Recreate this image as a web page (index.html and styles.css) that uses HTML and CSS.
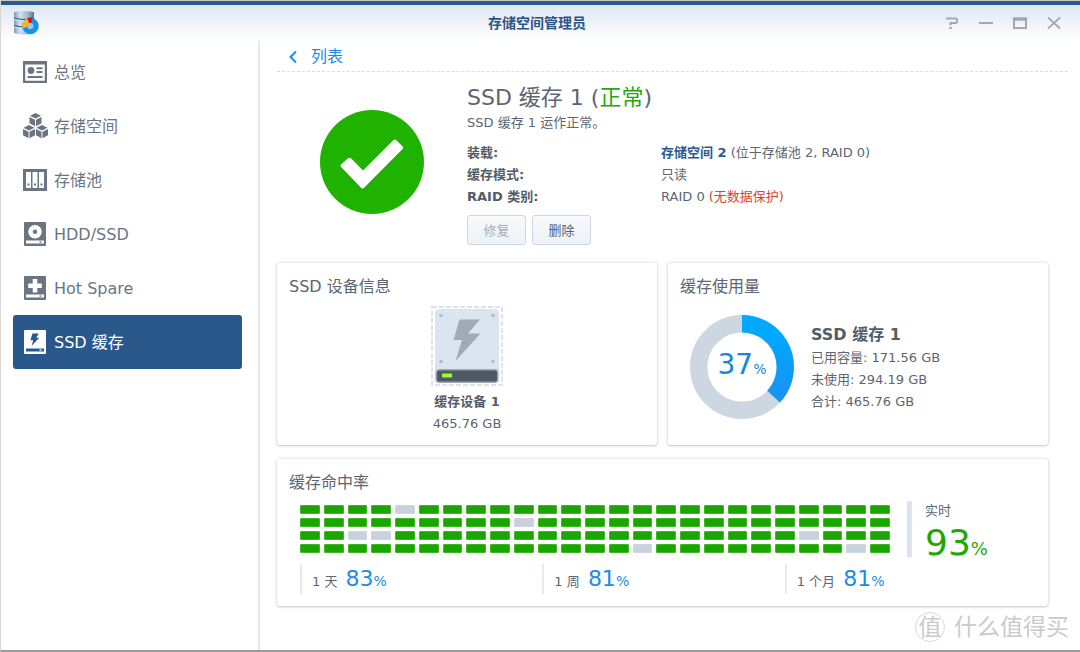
FILE: index.html
```html
<!DOCTYPE html>
<html lang="zh-CN">
<head>
<meta charset="utf-8">
<meta name="viewport" content="width=device-width, initial-scale=1">
<title>存储空间管理员</title>
<link rel="stylesheet" href="styles.css">
</head>
<body>
<div class="window">
  <header class="titlebar">
    <svg class="app-logo" width="26" height="26" viewBox="0 0 26 26" aria-hidden="true">
      <defs>
        <linearGradient id="disk" x1="0" x2="1" y1="0" y2="0">
          <stop offset="0" stop-color="#7f9db8"/><stop offset=".3" stop-color="#d3e3ef"/><stop offset=".7" stop-color="#9ab7cf"/><stop offset="1" stop-color="#4f7699"/>
        </linearGradient>
      </defs>
      <path d="M1 2q10-2 20 0v21q-10 3-20 0z" fill="url(#disk)"/>
      <path d="M1 8q10 3 20 0M1 15.500q10 3 20 0" fill="none" stroke="#3d5c7a" stroke-width="1.200"/>
      <path d="M1 9.500q10 3 20 0M1 17q10 3 20 0" fill="none" stroke="#e4eff7" stroke-width=".8"/>
      <circle cx="17.500" cy="16" r="5.700" fill="none" stroke="#0a95f5" stroke-width="5"/>
      <path d="M11.900 17.500A5.700 5.700 0 0 1 15.500 10.700" fill="none" stroke="#fdb515" stroke-width="5"/>
      <path d="M15.300 10.800A5.700 5.700 0 0 1 18.800 10.400" fill="none" stroke="#e3101c" stroke-width="5.500"/>
      <circle cx="17.500" cy="16" r="3" fill="#a9c3d6"/>
    </svg>
    <h1 class="app-title">存储空间管理员</h1>
    <div class="window-controls">
      <button type="button" aria-label="帮助"><svg width="14" height="14" viewBox="0 0 14 14"><path d="M1 2.500h9.500q1.500 0 1.500 1.500v1.500q0 1.500-1.500 1.500H5.500v2.500M4.300 12h2.600" fill="none" stroke="currentColor" stroke-width="2"/></svg></button>
      <button type="button" aria-label="最小化"><svg width="14" height="14" viewBox="0 0 14 14"><path d="M0 7h14" stroke="currentColor" stroke-width="2"/></svg></button>
      <button type="button" aria-label="最大化"><svg width="14" height="14" viewBox="0 0 14 14"><path d="M1 2v10h12V2" fill="none" stroke="currentColor" stroke-width="2"/><path d="M0 3h14" stroke="currentColor" stroke-width="3.500"/></svg></button>
      <button type="button" aria-label="关闭"><svg width="14" height="14" viewBox="0 0 14 14"><path d="M1 1.500l12 11M13 1.500l-12 11" stroke="currentColor" stroke-width="1.700"/></svg></button>
    </div>
  </header>

  <div class="body">
    <nav class="sidebar" aria-label="导航">
      <a class="nav-item" href="#overview">
        <svg class="nav-icon" viewBox="0 0 26 26"><path fill="currentColor" fill-rule="evenodd" d="M1 2h24v22H1zM3.200 5.500v16.200h19.600V5.500z"/><circle cx="9" cy="11.500" r="3.400" fill="currentColor"/><path d="M14.500 9.200h6M14.500 13h6M5.500 18h15" stroke="currentColor" stroke-width="2"/></svg>
        <span>总览</span>
      </a>
      <a class="nav-item" href="#volume">
        <svg class="nav-icon" viewBox="0 0 26 26">
          <defs><g id="cube" fill="currentColor"><path d="M6 0l5.500 2.700L6 5.400.5 2.700zM0 4l5.500 2.700v6.500L0 10.300zM12 4L6.500 6.700v6.500L12 10.300z"/></g></defs>
          <use href="#cube" x="7.500" y="0"/><use href="#cube" x="1" y="12"/><use href="#cube" x="14" y="12"/>
        </svg>
        <span>存储空间</span>
      </a>
      <a class="nav-item" href="#pool">
        <svg class="nav-icon" viewBox="0 0 26 26"><path fill="currentColor" fill-rule="evenodd" d="M1 2h24v22H1zM4 5v16h5V5zM10.500 5v16h5V5zM17 5v16h5V5z"/><path d="M5.500 16.500h2v2h-2zM12 16.500h2v2h-2zM18.500 16.500h2v2h-2z" fill="currentColor"/></svg>
        <span>存储池</span>
      </a>
      <a class="nav-item" href="#drives">
        <svg class="nav-icon" viewBox="0 0 26 26"><rect x="2" y="1" width="22" height="24" rx="1" fill="currentColor"/><circle cx="13" cy="10.800" r="6.800" fill="#fff"/><circle cx="13" cy="10.800" r="2.200" fill="currentColor"/><path d="M4 19.500h18v3H4z" fill="#fff"/><path d="M17.500 21h2" stroke="currentColor" stroke-width="1.300"/></svg>
        <span>HDD/SSD</span>
      </a>
      <a class="nav-item" href="#spare">
        <svg class="nav-icon" viewBox="0 0 26 26"><rect x="2" y="1" width="22" height="24" rx="1" fill="currentColor"/><path d="M13 4v13.500M6.200 10.700h13.600" stroke="#fff" stroke-width="4.600"/><path d="M4 19.500h18v3H4z" fill="#fff"/><path d="M17.500 21h2" stroke="currentColor" stroke-width="1.300"/></svg>
        <span>Hot Spare</span>
      </a>
      <a class="nav-item active" href="#cache" aria-current="page">
        <svg class="nav-icon" viewBox="0 0 26 26"><rect x="2" y="1" width="22" height="24" rx="1" fill="#fff"/><path d="M10.500 4.500h6.300l-2.600 4.300h3L9.500 17l1.800-5.700H8.400z" fill="#2a588b"/><path d="M4 19.500h18v3H4z" fill="#2a588b"/><path d="M17.500 21h2" stroke="#fff" stroke-width="1.300"/></svg>
        <span>SSD 缓存</span>
      </a>
    </nav>

    <main class="content">
      <div class="crumb">
        <a class="back" href="#list">
          <svg width="8" height="14" viewBox="0 0 8 14" aria-hidden="true"><path d="M7 1.500L1.500 7 7 12.500" fill="none" stroke="currentColor" stroke-width="2"/></svg>
          <span>列表</span>
        </a>
      </div>

      <section class="status">
        <svg class="status-badge" width="104" height="104" viewBox="0 0 104 104" role="img" aria-label="正常">
          <circle cx="52" cy="52" r="52" fill="#1fb300"/>
          <path d="M22.500 56l6-6.500q1.500-1.300 3 0L43 61 73.500 30q1.300-1.200 2.600 0l6.600 6.200q1.300 1.300 0 2.700L44.500 77.800q-1.700 1.700-3.300 0L22.500 58.500q-1.200-1.300 0-2.500z" fill="#0f7a00" opacity=".5" transform="translate(0 1)"/>
          <path d="M21 54.500l7-6.200q1.500-1.200 3 0L43 60.500 73.500 30q1.300-1.200 2.600 0l6.600 6.500q1.300 1.300 0 2.600L44 78q-1.400 1.300-2.800 0L21 57q-1.200-1.300 0-2.500z" fill="#fff"/>
        </svg>
        <div class="status-info">
          <h2 class="status-title">SSD 缓存 1 (<span class="ok">正常</span>)</h2>
          <p class="status-text">SSD 缓存 1 运作正常。</p>
          <dl class="facts">
            <dt>装载:</dt><dd><strong class="volume">存储空间 2</strong> (位于存储池 2, RAID 0)</dd>
            <dt>缓存模式:</dt><dd>只读</dd>
            <dt>RAID 类别:</dt><dd>RAID 0 <span class="warn">(无数据保护)</span></dd>
          </dl>
          <div class="actions">
            <button class="btn" type="button" disabled>修复</button>
            <button class="btn" type="button">删除</button>
          </div>
        </div>
      </section>

      <div class="cards">
        <section class="card">
          <h3 class="card-title">SSD 设备信息</h3>
          <div class="device">
            <svg width="72" height="80" viewBox="0 0 72 80" aria-hidden="true">
              <rect x="1" y="1" width="70" height="78" fill="none" stroke="#dbe3f0" stroke-width="2" stroke-dasharray="5 2"/>
              <rect x="4" y="3" width="64" height="74" rx="4" fill="#dce5ef"/>
              <g fill="#b3bdc7"><circle cx="10" cy="9.500" r="1.800"/><circle cx="62" cy="9.500" r="1.800"/><circle cx="10" cy="55.500" r="1.800"/><circle cx="62" cy="55.500" r="1.800"/></g>
              <path d="M28.500 13.500H49L37 27.500h12.500L24.500 55l6.500-21h-8.500z" fill="#a1abb5"/>
              <rect x="4.500" y="63" width="63" height="14" rx="4" fill="#9ca8b4"/>
              <rect x="6" y="64.500" width="60" height="11" rx="2" fill="#4e5963"/>
              <rect x="11" y="67.500" width="10" height="4" rx="1" fill="#9bff2e"/>
            </svg>
            <strong class="device-name">缓存设备 1</strong>
            <span>465.76 GB</span>
          </div>
        </section>

        <section class="card">
          <h3 class="card-title">缓存使用量</h3>
          <div class="usage">
            <div class="donut">
              <svg width="104" height="104" viewBox="0 0 104 104" aria-hidden="true">
                <defs><linearGradient id="used" gradientUnits="userSpaceOnUse" x1="0" y1="0" x2="0" y2="90"><stop offset=".2" stop-color="#00a8ff"/><stop offset="1" stop-color="#1c91f2"/></linearGradient></defs>
                <circle cx="52" cy="52" r="43.300" fill="none" stroke="#cdd7e1" stroke-width="17.400"/>
                <path d="M52 8.700A43.300 43.300 0 1 1 51.990 8.700" pathLength="100" fill="none" stroke="url(#used)" stroke-width="17.400" stroke-dasharray="37 100"/>
              </svg>
              <div class="donut-label">37<small>%</small></div>
            </div>
            <div class="usage-info">
              <h4 class="usage-title">SSD 缓存 1</h4>
              <p>已用容量: 171.56 GB</p>
              <p>未使用: 294.19 GB</p>
              <p>合计: 465.76 GB</p>
            </div>
          </div>
        </section>
      </div>

      <section class="card hit-card">
        <h3 class="card-title">缓存命中率</h3>
        <div class="hit-row">
          <div class="hit-grid" id="hit-grid" role="img" aria-label="命中率 93%"></div>
          <div class="realtime">
            <span class="realtime-label">实时</span>
            <span class="realtime-value">93<small>%</small></span>
          </div>
        </div>
        <div class="stats">
          <div class="stat">1 天 <span class="stat-value">83<small>%</small></span></div>
          <div class="stat">1 周 <span class="stat-value">81<small>%</small></span></div>
          <div class="stat">1 个月 <span class="stat-value">81<small>%</small></span></div>
        </div>
      </section>
    </main>
  </div>

  <div class="watermark">
    <span class="watermark-seal">值</span>
    <span>什么值得买</span>
  </div>
</div>
<script src="script.js"></script>
</body>
</html>
```
FILE: styles.css
```css
* { box-sizing: border-box; }

body {
  margin: 0;
  background: #fff;
  color: #5b6672;
  font: 13px/22px "DejaVu Sans", "Noto Sans CJK SC", sans-serif;
}

h1, h2, h3, h4, p, dl, dd { margin: 0; }
a { color: inherit; text-decoration: none; }
button { font: inherit; cursor: pointer; }

.window {
  position: relative;
  display: flex;
  flex-direction: column;
  min-height: 100vh;
  border-top: 1px solid #c9c9c5;
  border-left: 1px solid #d6d6d6;
  border-bottom: 2px solid #9b9b9b;
}

/* Title bar */
.titlebar {
  display: grid;
  grid-template-columns: 1fr auto 1fr;
  align-items: center;
  height: 40px;
  padding: 0 19px 0 12px;
  border-top: 4px solid #2a5a8e;
  background: linear-gradient(#e0e7f1, #fff);
}
.app-title {
  color: #2a5588;
  font-size: 14px;
  line-height: 20px;
}
.window-controls {
  display: flex;
  justify-content: flex-end;
  gap: 20px;
}
.window-controls button {
  display: flex;
  padding: 0;
  border: 0;
  background: none;
  color: #a2a9b3;
}

.body {
  display: flex;
  flex: 1;
}

/* Sidebar */
.sidebar {
  flex: 0 0 259px;
  padding: 4px 16px 0 12px;
  border-right: 2px solid #e6e7e9;
}
.nav-item {
  display: flex;
  align-items: center;
  gap: 6px;
  height: 54px;
  padding: 0 9px;
  border-radius: 3px;
  color: #6b7580;
  font-size: 16px;
}
.nav-item span { padding-top: 2px; }
.nav-icon {
  width: 26px;
  height: 26px;
}
.nav-item.active {
  background: #2a588b;
  color: #fff;
}

/* Content */
.content {
  flex: 1;
  min-width: 0;
  padding: 0 12px 40px 17px;
}
.crumb {
  display: flex;
  padding: 4px 12px 2px;
  border-bottom: 1px dashed #d3deea;
}
.back {
  display: flex;
  align-items: center;
  gap: 14px;
  color: #1a8ce8;
  font-size: 16px;
  line-height: 24px;
}

.status {
  display: flex;
  align-items: flex-start;
  gap: 43px;
  padding: 11px 0 18px 43px;
}
.status-badge {
  flex: none;
  margin-top: 27px;
}
.status-info { flex: 1; }
.status-title {
  font-size: 22px;
  font-weight: 400;
  line-height: 30px;
}
.ok { color: #26a80c; }
.warn { color: #d9442f; }
.volume { color: #2a5a92; }
.status-text { line-height: 20px; }
.facts {
  display: grid;
  grid-template-columns: 194px 1fr;
  margin: 9px 0 7px;
}
.facts dt {
  color: #525d69;
  font-weight: 700;
}
.actions {
  display: flex;
  gap: 6px;
}
.btn {
  min-width: 59px;
  height: 30px;
  padding: 1px 12px 0;
  border: 1px solid #ccd7e3;
  border-radius: 3px;
  background: linear-gradient(#f7f9fc, #edf2f7);
  color: #57616c;
}
.btn:disabled {
  color: #a5aeb8;
  cursor: default;
}

/* Cards */
.cards {
  display: grid;
  grid-template-columns: 1fr 1fr;
  gap: 11px;
  margin-right: 20px;
}
.card {
  min-height: 182px;
  padding: 13px 12px 10px;
  border-radius: 3px;
  background: #fff;
  box-shadow: 0 0 3px 1px rgba(0, 0, 0, .1), 0 1px 2px rgba(0, 0, 0, .14);
}
.card-title {
  font-size: 16px;
  font-weight: 400;
}
.device {
  display: flex;
  flex-direction: column;
  align-items: center;
  padding-top: 8px;
}
.device-name {
  margin-top: 5px;
  color: #525d69;
}
.usage {
  display: flex;
  gap: 17px;
  padding: 17px 10px 0;
}
.donut {
  display: grid;
  place-items: center;
}
.donut svg, .donut-label { grid-area: 1 / 1; }
.donut-label {
  color: #1189e4;
  font-size: 28px;
}
.donut-label small { font-size: 14px; }
.usage-info { padding-top: 8px; }
.usage-title {
  color: #525d69;
  font-size: 16px;
  line-height: 24px;
}

.hit-card {
  min-height: 147px;
  margin: 14px 20px 0 0;
}
.hit-row {
  display: flex;
  gap: 17px;
  padding: 7px 0 0 11px;
}
.hit-grid {
  display: grid;
  flex: 1;
  grid-template-columns: repeat(25, 1fr);
  grid-auto-rows: 9px;
  align-content: center;
  gap: 4px;
}
.hit {
  border: 1px solid #3db822;
  border-radius: 1px;
  background: #1aa500;
}
.miss {
  border-color: #cfd7e1;
  background: #c8d1dc;
}
.realtime {
  display: flex;
  flex: 0 0 129px;
  flex-direction: column;
  height: 56px;
  padding-left: 13px;
  border-left: 5px solid #dae3ee;
}
.realtime-label { line-height: 20px; }
.realtime-value {
  color: #1ea800;
  font-size: 36px;
  line-height: 44px;
}
.realtime-value small { font-size: 18px; }
.stats {
  display: grid;
  grid-template-columns: repeat(3, 1fr);
  padding: 7px 9px 0 11px;
}
.stat {
  height: 30px;
  padding-left: 10px;
  border-left: 2px solid #e4eaf3;
  line-height: 30px;
}
.stat-value {
  margin-left: 4px;
  color: #1a8ce8;
  font-size: 22px;
}
.stat-value small { font-size: 14px; }

/* Site mark over the lower right corner */
.watermark {
  position: absolute;
  right: 11px;
  bottom: 7px;
  display: flex;
  align-items: center;
  gap: 9px;
  color: #cacaca;
  font-size: 23px;
  line-height: 32px;
}
.watermark-seal {
  width: 30px;
  height: 30px;
  border: 1px solid #d8d8d8;
  border-radius: 50%;
  line-height: 28px;
  text-align: center;
}
```
FILE: script.js
```js
// Each row lists the columns whose block is a miss.
const columns = 25;
const misses = [[4], [9], [2, 3, 21], [14, 23]];
const grid = document.getElementById('hit-grid');
misses.forEach((row) => {
  for (let i = 0; i < columns; i++) {
    const cell = document.createElement('span');
    cell.className = row.includes(i) ? 'hit miss' : 'hit';
    grid.appendChild(cell);
  }
});
```
